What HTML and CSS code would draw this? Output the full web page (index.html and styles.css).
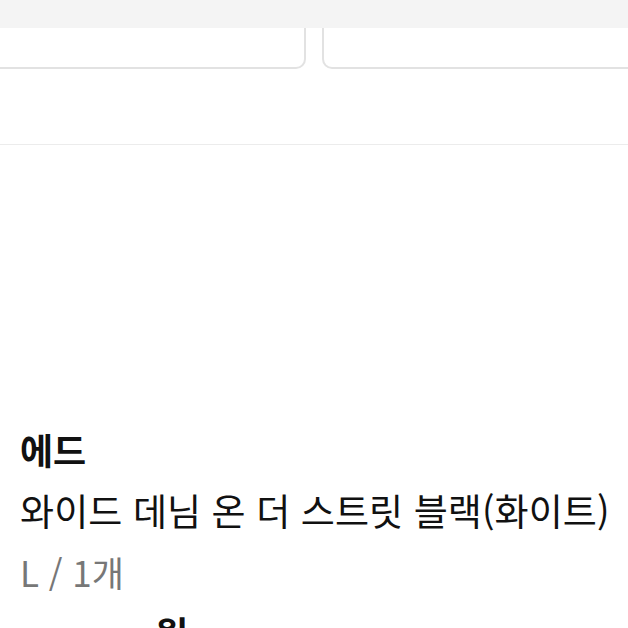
FILE: index.html
```html
<!DOCTYPE html>
<html lang="ko">
<head>
    <meta charset="UTF-8">
    <title>주문 상세</title>
    <link rel="stylesheet" href="styles.css">
</head>
<body>
<div class="topbar"></div>

<div class="cards">
    <div class="card">
        <span class="card-text">결제 수단</span>
    </div>
    <div class="card">
        <span class="card-text right">주문 내역</span>
    </div>
</div>

<div class="divider"></div>

<div class="item">
    <div class="brand">에드</div>
    <div class="name">와이드 데님 온 더 스트릿 블랙(화이트)</div>
    <div class="option">L / 1개</div>
    <div class="price"><span>원</span></div>
</div>
</body>
</html>
```

FILE: styles.css
```css
body {
    margin: 0;
    background: #fff;
    font-family: "Noto Sans CJK KR", "Noto Sans", sans-serif;
    color: #111;
    overflow: hidden;
}
.topbar {
    position: absolute;
    top: 0;
    left: 0;
    right: 0;
    height: 28px;
    background: #f4f4f4;
    z-index: 10;
}
.cards {
    display: grid;
    grid-template-columns: 326px 326px;
    gap: 16px;
    margin-left: -20px;
}
.card {
    height: 69px;
    border: 2px solid #e2e2e2;
    border-top: 0;
    border-radius: 0 0 10px 10px;
    background: #fff;
    padding: 0 20px;
    box-sizing: border-box;
    position: relative;
}
.card-text {
    display: block;
    font-size: 26px;
    line-height: 30px;
    margin-top: -2px;
    font-weight: bold;
}
.card-text.right {
    text-align: right;
}
.divider {
    margin-top: 75px;
    height: 1px;
    background: #ececec;
}
.item {
    padding: 274px 20px 0;
}
.brand {
    font-size: 36px;
    font-weight: bold;
    line-height: 61px;
}
.name {
    font-size: 37px;
    line-height: 61px;
    white-space: nowrap;
    letter-spacing: 0.1px;
}
.option {
    font-size: 35px;
    line-height: 61px;
    color: #777;
}
.price {
    font-size: 36px;
    line-height: 61px;
    font-weight: bold;
    padding-left: 135px;
}
```
